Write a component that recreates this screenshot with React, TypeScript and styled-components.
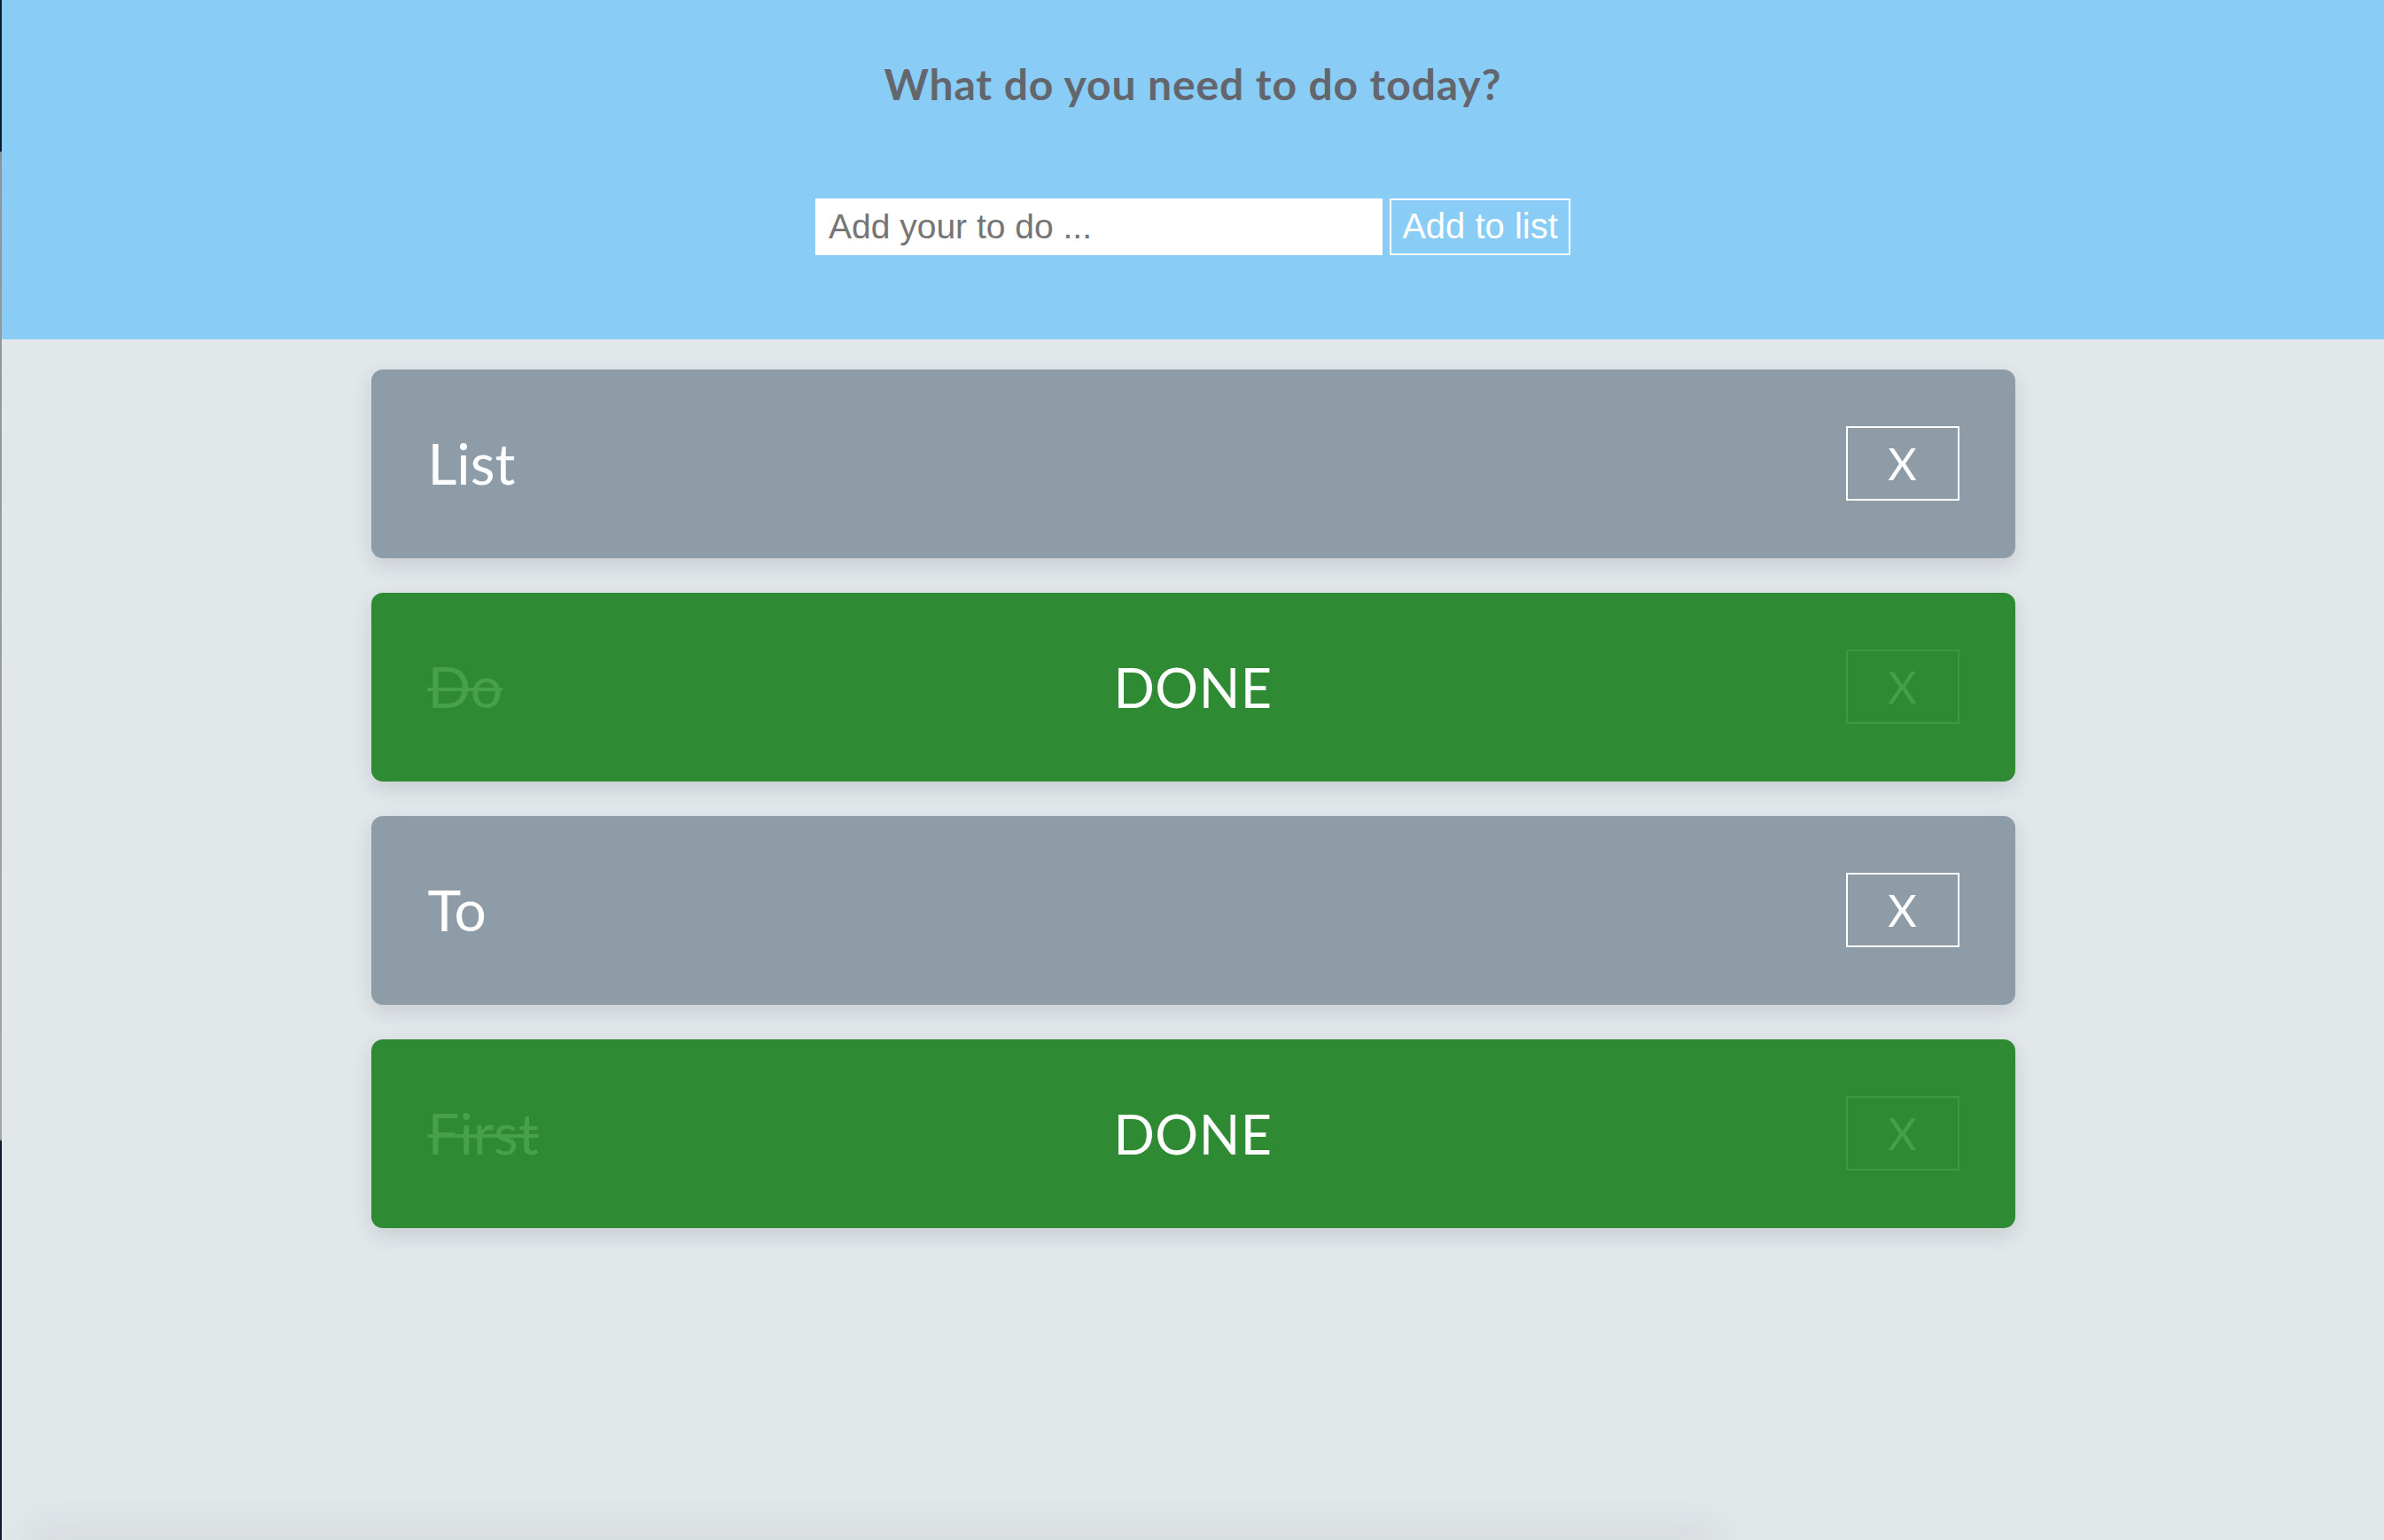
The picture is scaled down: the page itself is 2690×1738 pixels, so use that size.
import React from "react";
import styled, { createGlobalStyle } from "styled-components";

const GlobalStyle = createGlobalStyle`
  html, body {
    margin: 0;
    padding: 0;
    background: #e2e7ea;
    overflow: hidden;
  }
  * { box-sizing: border-box; }
`;

const Page = styled.div`
  display: grid;
  grid-template-columns: 2px 1fr;
  height: 100vh;
  overflow: hidden;
`;

const EdgeStrip = styled.div`
  background: linear-gradient(
    to bottom,
    #101b2b 0,
    #101b2b 9.8%,
    #8f9397 9.9%,
    #a3a5a8 74%,
    #121c29 74.1%,
    #121c29 100%
  );
`;

const Main = styled.div`
  display: flex;
  flex-direction: column;
  min-width: 0;
  overflow: hidden;
`;

const Header = styled.header`
  background: #89cdf7;
  padding: 66px 0 95px;
  text-align: center;
`;

const Title = styled.h1`
  margin: 0 0 100px;
  font-family: Lato, "Noto Sans", sans-serif;
  font-weight: 700;
  font-size: 48px;
  letter-spacing: 0.9px;
  line-height: 1.2;
  color: #63666d;
`;

const AddForm = styled.form`
  display: flex;
  justify-content: center;
  gap: 8px;
`;

const TodoInput = styled.input`
  width: 640px;
  height: 64px;
  border: none;
  outline: none;
  padding: 0 15px;
  background: #ffffff;
  font-family: "Liberation Sans", Arial, sans-serif;
  font-size: 39px;
  color: #333;
  &::placeholder {
    color: #757575;
  }
`;

const AddButton = styled.button`
  width: 204px;
  height: 64px;
  border: 2px solid #ffffff;
  background: transparent;
  color: #ffffff;
  padding: 0 12px;
  font-family: "Liberation Sans", Arial, sans-serif;
  font-size: 40px;
  cursor: pointer;
`;

const List = styled.ul`
  list-style: none;
  margin: 34px auto 0;
  padding: 0;
  width: 1855px;
  display: flex;
  flex-direction: column;
  gap: 39px;
`;

const Card = styled.li<{ $done: boolean }>`
  position: relative;
  height: 213px;
  border-radius: 13px;
  background: ${(p) => (p.$done ? "#2f8a34" : "#8e9ca8")};
  box-shadow: 0 8px 22px rgba(40, 50, 60, 0.14);
  display: flex;
  align-items: center;
  justify-content: space-between;
  padding: 0 63px 0 64px;
`;

const Label = styled.span<{ $done: boolean }>`
  font-family: Lato, "Noto Sans", sans-serif;
  font-size: 64px;
  line-height: 1.2;
  color: ${(p) => (p.$done ? "#47a14b" : "#ffffff")};
  text-decoration: ${(p) => (p.$done ? "line-through" : "none")};
  text-decoration-thickness: 4px;
`;

const DoneBadge = styled.span`
  position: absolute;
  left: 50%;
  top: 50%;
  transform: translate(-50%, -50%);
  font-family: Lato, "Noto Sans", sans-serif;
  font-size: 61px;
  letter-spacing: 0.5px;
  color: #ffffff;
  pointer-events: none;
`;

const RemoveButton = styled.button<{ $done: boolean }>`
  width: 128px;
  height: 84px;
  display: flex;
  align-items: center;
  justify-content: center;
  background: transparent;
  border: 2px solid ${(p) => (p.$done ? "#3f9844" : "#ffffff")};
  color: ${(p) => (p.$done ? "#46a04a" : "#ffffff")};
  font-family: Lato, "Noto Sans", sans-serif;
  font-size: 50px;
  padding: 0;
  cursor: pointer;
`;

const Filler = styled.div`
  flex: 1;
`;

const NextPanelEdge = styled.div`
  height: 0;
  margin: 0 760px 0 40px;
  box-shadow: 0 0 44px 10px rgba(40, 50, 60, 0.12);
  border-radius: 12px;
`;

type Todo = { id: number; text: string; done: boolean };

const todos: Todo[] = [
  { id: 1, text: "List", done: false },
  { id: 2, text: "Do", done: true },
  { id: 3, text: "To", done: false },
  { id: 4, text: "First", done: true },
];

export default function App() {
  return (
    <>
      <GlobalStyle />
      <Page>
        <EdgeStrip />
        <Main>
          <Header>
            <Title>What do you need to do today?</Title>
            <AddForm onSubmit={(e) => e.preventDefault()}>
              <TodoInput placeholder="Add your to do ..." />
              <AddButton type="submit">Add to list</AddButton>
            </AddForm>
          </Header>
          <List>
            {todos.map((t) => (
              <Card key={t.id} $done={t.done}>
                <Label $done={t.done}>{t.text}</Label>
                {t.done && <DoneBadge>DONE</DoneBadge>}
                <RemoveButton $done={t.done}>X</RemoveButton>
              </Card>
            ))}
          </List>
          <Filler />
          <NextPanelEdge />
        </Main>
      </Page>
    </>
  );
}
